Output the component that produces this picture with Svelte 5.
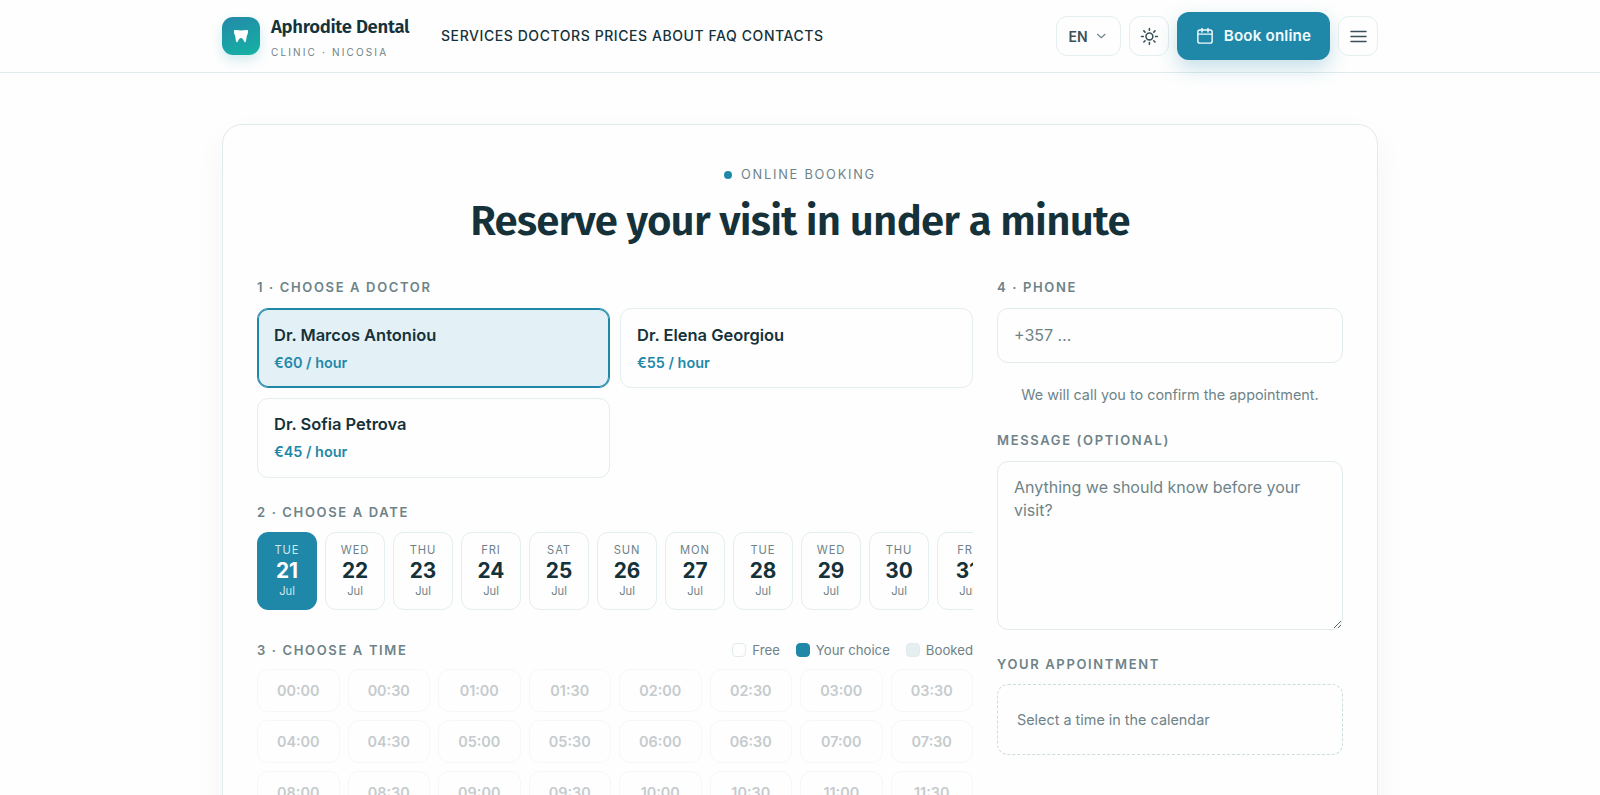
<script>
  const nav = ['Services', 'Doctors', 'Prices', 'About', 'FAQ', 'Contacts'];
  const doctors = [
    { name: 'Dr. Marcos Antoniou', rate: '€60 / hour' },
    { name: 'Dr. Elena Georgiou', rate: '€55 / hour' },
    { name: 'Dr. Sofia Petrova', rate: '€45 / hour' }
  ];
  const weekdays = ['Tue', 'Wed', 'Thu', 'Fri', 'Sat', 'Sun', 'Mon'];
  const dates = Array.from({ length: 11 }, (_, i) => ({ day: weekdays[i % 7], num: 21 + i }));
  const times = Array.from(
    { length: 24 },
    (_, i) => `${String(Math.floor(i / 2)).padStart(2, '0')}:${i % 2 ? '30' : '00'}`
  );
  let doctor = $state(0);
  let date = $state(0);
</script>

<div class="page">
  <header>
    <div class="bar">
      <a class="brand" href="#top">
        <span class="logo">
          <svg width="18" height="18" viewBox="0 0 18 18" fill="#fff">
            <path d="M2 3.200C4.500 2.500 6.500 3.500 9 3.500s4.500-1 7-.3c.3 2.200-.4 4-1.200 5.800-.5 1.700-.4 6.200-1.700 6.200-1.700 0-1.500-4.100-4.100-4.100s-2.400 4.100-4.100 4.100C3.600 15.200 3.700 10.700 3.200 9 2.400 7.200 1.700 5.400 2 3.200z" />
          </svg>
        </span>
        <span class="brandtext">
          <span class="name">Aphrodite Dental</span>
          <span class="sub">Clinic · Nicosia</span>
        </span>
      </a>
      <nav>
        {#each nav as item}
          <a href="#{item.toLowerCase()}">{item}</a>{' '}
        {/each}
      </nav>
      <div class="actions">
        <button class="ghost lang">
          EN
          <svg width="12" height="12" viewBox="0 0 24 24" fill="none" stroke="#6e8388" stroke-width="2.200" stroke-linecap="round" stroke-linejoin="round"><path d="M5 8.500l7.500 7 7.500-7" /></svg>
        </button>
        <button class="ghost square" aria-label="Theme">
          <svg width="20" height="20" viewBox="0 0 24 24" fill="none" stroke="currentColor" stroke-width="1.900" stroke-linecap="round"><circle cx="12.500" cy="12.500" r="4.100" /><path d="M12.500 3v2.200M12.500 19.800V22M3 12.500h2.200M19.800 12.500H22M5.800 5.800l1.500 1.500M17.700 17.700l1.500 1.500M5.800 19.200l1.500-1.500M17.700 7.300l1.500-1.500" /></svg>
        </button>
        <button class="book">
          <svg width="18" height="18" viewBox="0 0 24 24" fill="none" stroke="currentColor" stroke-width="1.900" stroke-linecap="round" stroke-linejoin="round"><rect x="2.500" y="4" width="19" height="17.500" rx="2.500" /><path d="M2.500 9.500h19M8 1.800v5M16 1.800v5" /></svg>
          <span>Book online</span>
        </button>
        <button class="ghost square" aria-label="Menu">
          <svg width="20" height="20" viewBox="0 0 24 24" fill="none" stroke="currentColor" stroke-width="1.800" stroke-linecap="round"><path d="M3.600 6.500h18M3.600 12.500h18M3.600 18.500h18" /></svg>
        </button>
      </div>
    </div>
  </header>

  <main>
    <section class="card">
      <div class="eyebrow"><i></i><span>Online booking</span></div>
      <h1>Reserve your visit in under a minute</h1>
      <div class="cols">
        <div class="left">
          <div class="label">1 · Choose a doctor</div>
          <div class="doctors">
            {#each doctors as d, i}
              <button class="doctor" class:active={doctor === i} onclick={() => (doctor = i)}>
                <span class="dname">{d.name}</span>
                <span class="rate">{d.rate}</span>
              </button>
            {/each}
          </div>
          <div class="label second">2 · Choose a date</div>
          <div class="dates">
            {#each dates as d, i}
              <button class="date" class:active={date === i} onclick={() => (date = i)}>
                <span class="dow">{d.day}</span>
                <span class="num">{d.num}</span>
                <span class="mon">Jul</span>
              </button>
            {/each}
          </div>
          <div class="timehead">
            <div class="label">3 · Choose a time</div>
            <div class="legend">
              <span><i class="free"></i>Free</span>
              <span><i class="choice"></i>Your choice</span>
              <span><i class="booked"></i>Booked</span>
            </div>
          </div>
          <div class="times">
            {#each times as t}
              <button class="time" disabled>{t}</button>
            {/each}
          </div>
        </div>
        <div class="right">
          <label class="label" for="phone">4 · Phone</label>
          <input id="phone" type="tel" placeholder="+357 …" />
          <p class="hint">We will call you to confirm the appointment.</p>
          <label class="label" for="message">Message (optional)</label>
          <textarea id="message" placeholder="Anything we should know before your visit?"></textarea>
          <div class="label appt">Your appointment</div>
          <div class="summary">Select a time in the calendar</div>
        </div>
      </div>
    </section>
  </main>
</div>

<style>
  :global(body) {
    margin: 0;
    background: #fefefe;
    overflow: hidden;
  }
  .page {
    height: 795px;
    overflow: hidden;
    font-family: Inter, sans-serif;
    color: #15323a;
    font-size: 16px;
  }
  .page :global(*) {
    box-sizing: border-box;
  }
  button,
  input,
  textarea {
    font-family: inherit;
    margin: 0;
  }
  a {
    color: inherit;
    text-decoration: none;
  }
  header {
    height: 73px;
    border-bottom: 1px solid #e1ebed;
    background: #fefefe;
  }
  .bar {
    width: 1156px;
    height: 72px;
    margin: 0 auto;
    display: flex;
    align-items: center;
  }
  .brand {
    display: flex;
    align-items: center;
    gap: 11px;
    width: 219px;
  }
  .logo {
    width: 38px;
    height: 38px;
    border-radius: 11px;
    background: linear-gradient(160deg, #2389a9, #14b3a3);
    box-shadow: 0 5px 12px rgba(31, 150, 175, 0.2);
    display: flex;
    align-items: center;
    justify-content: center;
  }
  .brandtext {
    display: flex;
    flex-direction: column;
    white-space: nowrap;
    padding-top: 3px;
  }
  .name {
    font-family: 'Fira Sans', 'Noto Sans', sans-serif;
    font-weight: 600;
    font-size: 18.500px;
    line-height: 24px;
    letter-spacing: -0.3px;
  }
  .sub {
    font-size: 10px;
    line-height: 16px;
    margin-top: 5px;
    letter-spacing: 2.150px;
    text-transform: uppercase;
    color: #6e8388;
  }
  nav {
    font-size: 14px;
    font-weight: 500;
    letter-spacing: 0.570px;
    text-transform: uppercase;
    white-space: nowrap;
    padding-bottom: 1px;
  }
  .actions {
    margin-left: auto;
    display: flex;
    align-items: center;
    gap: 8px;
  }
  .ghost {
    height: 40px;
    border: 1px solid #e4edef;
    border-radius: 11px;
    background: #fefefe;
    color: #3b525a;
    display: flex;
    align-items: center;
    justify-content: center;
    padding: 0;
  }
  .lang {
    width: 65px;
    gap: 7px;
    padding-right: 2px;
    font-size: 14px;
    font-weight: 600;
  }
  .square {
    width: 40px;
  }
  .book {
    width: 153px;
    height: 48px;
    border: 0;
    border-radius: 12px;
    background: #1f88a9;
    color: #f1fafc;
    font-size: 15.200px;
    letter-spacing: 0.15px;
    font-weight: 600;
    display: flex;
    align-items: center;
    justify-content: center;
    gap: 10px;
    padding: 0;
    white-space: nowrap;
    box-shadow: 0 8px 20px rgba(31, 136, 169, 0.26);
  }
  .book span {
    padding-bottom: 2px;
  }
  main {
    width: 1156px;
    margin: 51px auto 0;
  }
  .card {
    height: 900px;
    border: 1px solid #e1ebed;
    border-radius: 20px;
    background: #fefefe;
    padding: 39px 34px;
    box-shadow: 0 12px 32px rgba(21, 50, 58, 0.045);
  }
  .eyebrow {
    display: flex;
    align-items: center;
    justify-content: center;
    gap: 9px;
    font-size: 12.800px;
    line-height: 20px;
    letter-spacing: 1.760px;
    text-transform: uppercase;
    color: #6e8388;
  }
  .eyebrow span {
    padding-top: 1px;
  }
  .eyebrow i {
    width: 8px;
    height: 8px;
    border-radius: 50%;
    background: #1f88a9;
  }
  h1 {
    margin: 12px 0 0;
    font-family: 'Fira Sans', 'Noto Sans', sans-serif;
    font-weight: 600;
    font-size: 42px;
    line-height: 48px;
    letter-spacing: -0.8px;
    text-align: center;
    white-space: nowrap;
  }
  .cols {
    display: grid;
    grid-template-columns: 716px 346px;
    gap: 24px;
    margin-top: 32px;
  }
  .label {
    display: block;
    font-size: 13px;
    font-weight: 600;
    line-height: 20px;
    letter-spacing: 1.640px;
    text-transform: uppercase;
    color: #6e8388;
  }
  .doctors {
    display: grid;
    grid-template-columns: 1fr 1fr;
    gap: 9.500px;
    column-gap: 10px;
    margin-top: 11px;
  }
  .doctor {
    height: 80px;
    border: 1px solid #e4edef;
    border-radius: 11px;
    background: #fefefe;
    padding: 0 16px;
    display: flex;
    flex-direction: column;
    justify-content: center;
    text-align: left;
    color: #15323a;
  }
  .doctor.active {
    border-color: #1f88a9;
    background: #e3f0f6;
    box-shadow: inset 0 0 0 1px #1f88a9;
  }
  .dname {
    font-size: 16.480px;
    font-weight: 600;
    line-height: 25px;
  }
  .rate {
    font-size: 14.400px;
    font-weight: 600;
    line-height: 23px;
    margin-top: 3px;
    color: #1f88a9;
  }
  .second {
    margin-top: 24.500px;
  }
  .dates {
    display: flex;
    gap: 8px;
    margin-top: 10px;
    overflow: hidden;
  }
  .date {
    flex: 0 0 60px;
    height: 78px;
    border: 1px solid #e4edef;
    border-radius: 11px;
    background: #fefefe;
    color: #15323a;
    padding: 0 0 2px;
    display: flex;
    flex-direction: column;
    align-items: center;
    justify-content: center;
  }
  .dow,
  .mon {
    font-size: 11.200px;
    line-height: 16px;
    color: #6e8388;
  }
  .dow {
    letter-spacing: 0.9px;
    text-transform: uppercase;
  }
  .num {
    font-size: 20.800px;
    font-weight: 700;
    line-height: 25px;
  }
  .date.active {
    background: #1f88a9;
    border-color: #1f88a9;
    color: #fff;
  }
  .date.active .dow,
  .date.active .mon {
    color: #cfe7ee;
  }
  .timehead {
    display: flex;
    justify-content: space-between;
    align-items: center;
    margin-top: 30px;
  }
  .legend {
    display: flex;
    gap: 16px;
    font-size: 13.200px;
    line-height: 20px;
    color: #6e8388;
  }
  .legend span {
    display: flex;
    align-items: center;
    gap: 6px;
  }
  .legend i {
    width: 14px;
    height: 14px;
    border-radius: 4px;
    border: 1px solid #e1ebed;
    background: #fefefe;
  }
  .legend .choice {
    background: #1f88a9;
    border-color: #1f88a9;
  }
  .legend .booked {
    background: #e6eff0;
  }
  .times {
    display: grid;
    grid-template-columns: repeat(8, 1fr);
    gap: 8px;
    margin-top: 9px;
  }
  .time {
    height: 43px;
    border: 1px solid #f5f8f8;
    border-radius: 11px;
    background: transparent;
    color: #c5cbcd;
    font-size: 14.400px;
    font-weight: 600;
    padding: 0;
  }
  .right {
    display: flex;
    flex-direction: column;
  }
  input,
  textarea {
    width: 346px;
    border: 1px solid #e1ebed;
    border-radius: 11px;
    background: #fefefe;
    color: #15323a;
    font-size: 16px;
    outline: 0;
  }
  input::placeholder,
  textarea::placeholder {
    color: #6e8388;
    opacity: 1;
  }
  input {
    height: 55px;
    padding: 0 16px 2px;
    margin-top: 11px;
  }
  .hint {
    margin: 21px 0 24px;
    font-size: 14.400px;
    line-height: 22px;
    text-align: center;
    color: #6e8388;
  }
  textarea {
    display: block;
    height: 169px;
    margin-top: 11px;
    padding: 14px 16px;
    line-height: 23px;
    resize: vertical;
  }
  .appt {
    margin-top: 24px;
  }
  .summary {
    height: 71px;
    margin-top: 10px;
    padding: 0 19px;
    border: 1px dashed #cddcdf;
    border-radius: 11px;
    display: flex;
    align-items: center;
    font-size: 14.400px;
    color: #6e8388;
  }
</style>
